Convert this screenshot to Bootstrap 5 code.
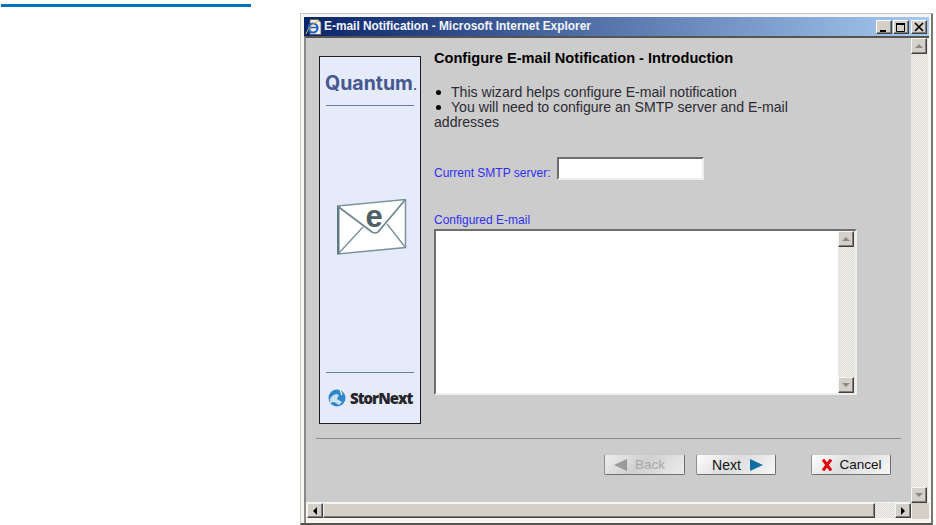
<!DOCTYPE html>
<html lang="en"><head><meta charset="utf-8"><title>E-mail Notification</title>
<link rel="stylesheet" href="https://cdn.jsdelivr.net/npm/bootstrap@5.3.0/dist/css/bootstrap.min.css">
<style>
html,body{height:525px;overflow:hidden;background:#fff;font-family:"Liberation Sans",Arial,sans-serif}
.rule-top{width:250px;height:3px;background:#0671b8;margin:4px 0 0 1px}
.ie-win{width:633px;height:512px;margin:6px 0 0 300px;background:#f6f5f1;border:1px solid #c9c8c4;border-right:2px solid #77766f;border-bottom:2px solid #55544f;padding:3px 2px 3px 3px}
.ie-title{height:19px;background:linear-gradient(90deg,#0a246a,#a6caf0);color:#f4f6fb;font:bold 11.9px/17px "Liberation Sans",sans-serif;padding:0 2px 0 1px;gap:1px}
.ie-title>span:first-of-type{margin-top:-1px}
.ie-ico{width:18px;height:18px;flex:none}
.ie-ctl{width:16px;height:14px;background:#d4d0c8;border:1px solid;border-color:#fff #404040 #404040 #fff;box-shadow:inset -1px -1px #808080;flex:none}
.ie-ctl svg{display:block;width:14px;height:12px}
.ctl-x{margin-left:1px}
.ie-client{height:487px;border-top:2px solid #55544f;border-left:2px solid #8a8a86}
.ie-main{background:#ccc;min-width:0;width:605px;height:464px;padding:18px 0 0 13px}
.side-panel{width:102px;height:368px;background:#e6ebfb;border:1px solid #1d1d22;flex:none}
.q-logo{font:700 19.500px "Inter","Liberation Sans",sans-serif;color:#44598f;height:34px;margin-top:14px;padding-left:2px;text-align:center;white-space:nowrap}
.q-logo small{font-size:12px;font-weight:700}
.p-line{height:1px;background:#6b7ba8;margin:0 6px}
.env-slot{padding:0 0 24px 3px}
.store{font:800 15px "Open Sans","Liberation Sans",sans-serif;color:#26262a;letter-spacing:-1px;gap:4px;margin-top:15px;margin-bottom:16px;padding-left:8px;height:19px}
.cont{padding-left:13px;width:436px;flex:none}
.h-cfg{font-size:14.6px;font-weight:700;color:#000;line-height:15px;margin:-5px 0 0}
.intro{font-size:14.1px;line-height:15px;color:#2b2b33;margin:19px 0 0;width:372px}
.intro i{display:inline-block;width:5px;height:5px;border-radius:50%;background:#000;margin:0 10px 2px 2px}
.lbl{font-size:12px;color:#3030f0;line-height:14px;margin:0}
.row-smtp{margin-top:26px;gap:7px;height:24px}
.in-box{width:147px;height:23px;background:#fff;border:2px solid;border-color:#6e6e6e #eeeeea #eeeeea #6e6e6e;border-radius:0;padding:0;display:block}
.lbl-2{margin-top:33px}
.ta-box{width:423px;height:166px;border:2px solid;border-color:#6e6e6e #eeeeea #eeeeea #6e6e6e;background:#fff;margin-top:2px}
.sb-v{width:17px;background:#e6e5e2 repeating-conic-gradient(#f1f0ed 0 25%,#dcdbd6 0 50%) 0 0/2px 2px;flex:none}
.sb-gap{flex:1}
.sb-btn{width:16px;height:16px;background:#d4d0c8;border:1px solid;border-color:#f5f5f2 #404040 #404040 #f5f5f2;box-shadow:inset -1px -1px #808080;flex:none}
.sb-btn svg{display:block;width:14px;height:14px}
.ta-fill{flex:1}
.sep{height:1px;background:#8b8b8b;margin:14px 0 0 -3px;width:585px}
.btn-row{margin-top:15px;width:572px;height:21px}
.xbtn{width:80px;height:21px;padding:0;font:13.500px "Liberation Sans",sans-serif;color:#111;border:1px solid;border-color:#c9c9c9 #6f6f6f #6f6f6f #8f8f8f;border-radius:2px;background:linear-gradient(135deg,#fff 0,#dcdcdc 45%,#f7f7f7 100%);line-height:1}
.xbtn.off{color:#a8a8a8;background:linear-gradient(135deg,#eee,#d0d0d0 45%,#ececec)}
.btn-back{width:81px;gap:8px;padding-right:10px}
.btn-next{margin-left:11px;gap:9px;padding-left:3px;font-size:14px}
.btn-cancel{margin-left:35px;gap:7px;padding-left:2px}
.sb-h{height:15px;width:604px;margin-left:1px;background:#ccc}
.thumb{width:552px;height:15px;background:#d4d0c8;border:1px solid;border-color:#f5f5f2 #404040 #404040 #f5f5f2;box-shadow:inset -1px -1px #808080}
.track{width:20px;height:15px;background:#e6e5e2 repeating-conic-gradient(#f1f0ed 0 25%,#dcdbd6 0 50%) 0 0/2px 2px}
.corner{width:17px;height:16px;background:#d4d0c8;margin-left:1px}
.sb-h .sb-btn{height:15px}
.right-v{height:465px;width:17px}
</style></head><body>
<div class="rule-top"></div>
<div class="ie-win">
  <div class="ie-title d-flex align-items-center">
    <svg class="ie-ico" viewBox="0 0 18 18"><path d="M5 1.500h8l3 3v12H5z" fill="#f4efdc" stroke="#555" stroke-width=".8"/><circle cx="8" cy="10" r="4.500" fill="none" stroke="#1f5fd0" stroke-width="2.200"/><path d="M4 9.500h8" stroke="#1f5fd0" stroke-width="1.500"/><path d="M1 16C3 10 9 4 14 3" fill="none" stroke="#e9b52b" stroke-width="1"/></svg>
    <span class="flex-grow-1">E-mail Notification - Microsoft Internet Explorer</span>
    <span class="ie-ctl"><svg viewBox="0 0 14 12"><path d="M3 9h6v2H3z" fill="#000"/></svg></span>
    <span class="ie-ctl"><svg viewBox="0 0 14 12"><path d="M2.500 2.500h8v8h-8z" fill="none" stroke="#000"/><path d="M2 2h9v2H2z" fill="#000"/></svg></span>
    <span class="ie-ctl ctl-x"><svg viewBox="0 0 14 12"><path d="M3 2l8 8M11 2l-8 8" stroke="#000" stroke-width="1.700"/></svg></span>
  </div>
  <div class="ie-client">
    <div class="d-flex">
      <div class="ie-main">
        <div class="d-flex">
          <div class="side-panel d-flex flex-column">
            <div class="q-logo">Quantum<small>.</small></div>
            <div class="p-line"></div>
            <div class="env-slot flex-grow-1 d-flex align-items-center justify-content-center">
              <svg width="70" height="56" viewBox="0 0 70 56"><path d="M.5 7L68.500.5v48L.5 55z" fill="#fff" stroke="#7d939b" stroke-width="1.500"/><path d="M1 7v48" stroke="#5f7983" stroke-width="3"/><path d="M1 7.500L35 33q3 2 6 0L68 1" fill="none" stroke="#6f8791" stroke-width="1.700"/><path d="M2 54L26 28M68 48L50 25" stroke="#7d939b" stroke-width="1.400"/><text x="37" y="28" text-anchor="middle" font-family="Liberation Sans" font-weight="700" font-size="31" fill="#4e5f66">e</text></svg>
            </div>
            <div class="p-line"></div>
            <div class="store d-flex align-items-center">
              <svg width="18" height="18" viewBox="0 0 18 18"><circle cx="9" cy="9" r="8.500" fill="#2f86c9"/><path d="M2 10c2-4 6-6 9-4l-2 4 5 3-3 3-5-3-4 1z" fill="#fff" opacity=".75"/><path d="M12 1l2 5" stroke="#fff" stroke-width="1.200"/></svg>
              <span>StorNext</span>
            </div>
          </div>
          <div class="cont">
            <h1 class="h-cfg">Configure E-mail Notification - Introduction</h1>
            <p class="intro"><i></i>This wizard helps configure E-mail notification<br><i></i>You will need to configure an SMTP server and E-mail addresses</p>
            <div class="row-smtp d-flex align-items-end">
              <label class="lbl" for="smtp">Current SMTP server:</label>
              <input class="in-box" id="smtp" type="text">
            </div>
            <p class="lbl lbl-2">Configured E-mail</p>
            <div class="ta-box d-flex">
              <div class="ta-fill"></div>
              <div class="sb-v d-flex flex-column">
                <span class="sb-btn"><svg viewBox="0 0 14 14"><path d="M3 9l4-4 4 4z" fill="#8a8a8a"/></svg></span>
                <span class="sb-gap"></span>
                <span class="sb-btn"><svg viewBox="0 0 14 14"><path d="M3 5l4 4 4-4z" fill="#8a8a8a"/></svg></span>
              </div>
            </div>
          </div>
        </div>
        <div class="sep"></div>
        <div class="btn-row d-flex justify-content-end">
          <button class="xbtn off btn-back d-flex align-items-center justify-content-center" type="button"><svg width="13" height="12" viewBox="0 0 13 12"><path d="M0 6L13 0v12z" fill="#9a9a9a"/></svg>Back</button>
          <button class="xbtn btn-next d-flex align-items-center justify-content-center" type="button">Next<svg width="13" height="12" viewBox="0 0 13 12"><path d="M13 6L0 0v12z" fill="#0f6ea6"/></svg></button>
          <button class="xbtn btn-cancel d-flex align-items-center justify-content-center" type="button"><svg width="10" height="12" viewBox="0 0 10 12"><path d="M1 .5l8 11M9 .5l-8 11" stroke="#e8000b" stroke-width="3"/></svg>Cancel</button>
        </div>
      </div>
      <div class="right-v sb-v d-flex flex-column">
        <span class="sb-btn"><svg viewBox="0 0 14 14"><path d="M3 9l4-4 4 4z" fill="#8a8a8a"/></svg></span>
        <span class="sb-gap"></span>
        <span class="sb-btn"><svg viewBox="0 0 14 14"><path d="M3 5l4 4 4-4z" fill="#8a8a8a"/></svg></span>
      </div>
    </div>
    <div class="d-flex">
      <div class="sb-h d-flex">
        <span class="sb-btn"><svg viewBox="0 0 14 14"><path d="M9 3L5 7l4 4z" fill="#000"/></svg></span>
        <span class="thumb"></span>
        <span class="track"></span>
        <span class="sb-btn"><svg viewBox="0 0 14 14"><path d="M5 3l4 4-4 4z" fill="#000"/></svg></span>
      </div>
      <div class="corner"></div>
    </div>
  </div>
</div>
</body></html>
